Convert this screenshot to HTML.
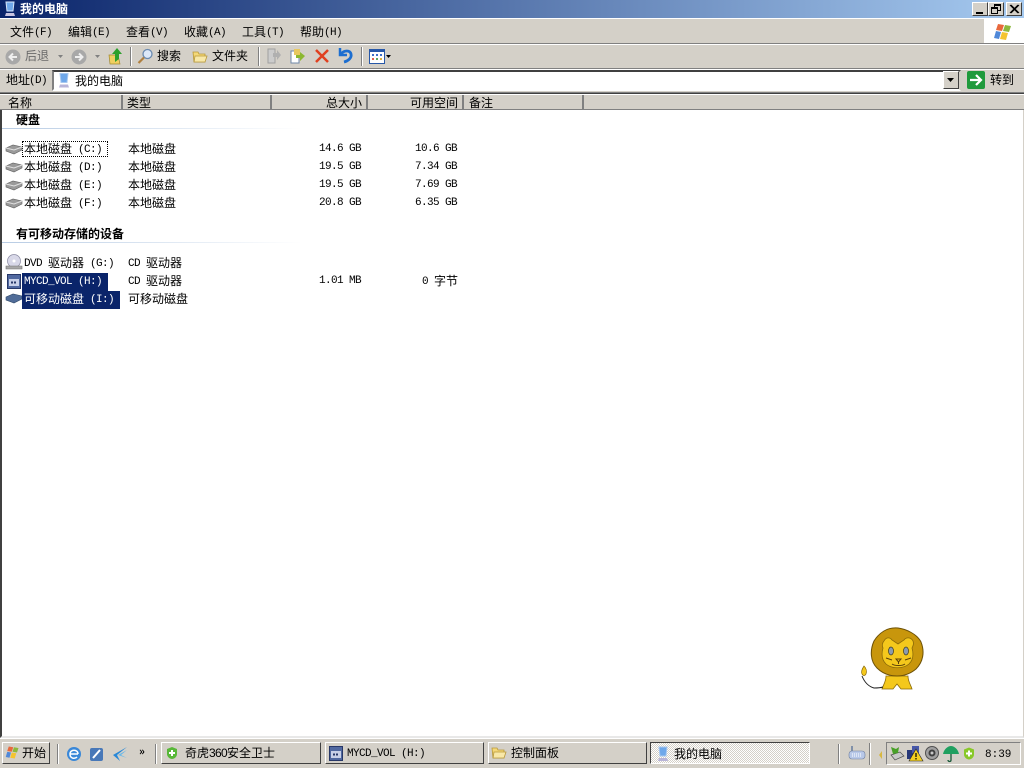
<!DOCTYPE html>
<html lang="zh"><head><meta charset="utf-8"><title>我的电脑</title>
<style>
html,body{margin:0;padding:0;width:1024px;height:768px;overflow:hidden;background:#d4d0c8}
body{position:relative;font:12px/14px "WenQuanYi Zen Hei","Noto Sans CJK SC",sans-serif;color:#000}
.a{position:absolute}
.t{position:absolute;white-space:pre;font:12px/14px "WenQuanYi Zen Hei","Noto Sans CJK SC",sans-serif}
.m{font:11px/14px "Liberation Mono",monospace;letter-spacing:-.6px;position:relative;top:-1px}
.n{position:absolute;white-space:pre;text-align:right;font:11px/14px "Liberation Mono",monospace;letter-spacing:-.6px}
.r{text-align:right}
.b{box-sizing:border-box;position:absolute;background:#d4d0c8;border:1px solid;border-color:#fff #404040 #404040 #fff}
.h{position:absolute;top:95px;height:15px;box-sizing:border-box;border-right:2px solid #808080;border-bottom:1px solid #808080;background:#d4d0c8}
.sep{position:absolute;width:1px;background:#808080;border-right:1px solid #fff}
.sel{position:absolute;background:#0a246a;height:18px}
.w{color:#fff}
svg{position:absolute;overflow:visible}
</style></head><body>

<!-- title bar -->
<div class="a" style="left:0;top:0;width:1024px;height:18px;background:linear-gradient(90deg,#0a246a,#a6caf0)"></div>
<svg style="left:3px;top:1px" width="14" height="16" viewBox="0 0 14 16"><path d="M3 1h8l-1 9H4z" fill="#6fa8ea" stroke="#d8e6fa"/><path d="M3 12h8l1 3H2z" fill="#c8c4e0"/></svg>
<div class="t" style="left:20px;top:2px;color:#fff;font-weight:bold">我的电脑</div>
<div class="b" style="left:972px;top:2px;width:16px;height:14px"><div class="a" style="left:3px;top:9px;width:7px;height:2px;background:#000"></div></div>
<div class="b" style="left:988px;top:2px;width:16px;height:14px"><div class="a" style="left:5px;top:1px;width:5px;height:4px;border:1px solid #000;border-top-width:2px"></div><div class="a" style="left:2px;top:4px;width:5px;height:4px;border:1px solid #000;border-top-width:2px;background:#d4d0c8"></div></div>
<div class="b" style="left:1006px;top:2px;width:16px;height:14px"><svg style="left:3px;top:2px" width="9" height="8"><path d="M0 0L8 8M1 0L9 8M8 0L0 8M9 0L1 8" stroke="#000"/></svg></div>

<!-- menu bar -->
<div class="a" style="left:0;top:18px;width:1024px;height:1px;background:#fff"></div>
<div class="t" style="left:10px;top:25px">文件<span class="m">(F)</span></div>
<div class="t" style="left:68px;top:25px">编辑<span class="m">(E)</span></div>
<div class="t" style="left:126px;top:25px">查看<span class="m">(V)</span></div>
<div class="t" style="left:184px;top:25px">收藏<span class="m">(A)</span></div>
<div class="t" style="left:242px;top:25px">工具<span class="m">(T)</span></div>
<div class="t" style="left:300px;top:25px">帮助<span class="m">(H)</span></div>
<div class="a" style="left:984px;top:19px;width:40px;height:24px;background:#fff"></div>
<svg style="left:993px;top:22px" width="20" height="20" viewBox="0 0 20 20"><path d="M5 2l6 1-2 6-6-1z" fill="#e8683c"/><path d="M12 3l6 1-2 6-6-1z" fill="#8cb83c"/><path d="M3 9l5 1-2 7-5-1z" fill="#5088d8"/><path d="M9 10l6 1-2 7-6-1z" fill="#f4c430"/></svg>
<div class="a" style="left:0;top:43px;width:1024px;height:1px;background:#808080"></div>
<div class="a" style="left:0;top:44px;width:1024px;height:1px;background:#fff"></div>

<!-- toolbar -->
<svg style="left:5px;top:49px" width="16" height="16"><circle cx="8" cy="8" r="7.5" fill="#a8a8a8"/><path d="M12 8H5M8 4.500L4.500 8 8 11.500" fill="none" stroke="#eee" stroke-width="2"/></svg>
<div class="t" style="left:25px;top:49px;color:#6a6a6a">后退</div>
<svg style="left:58px;top:55px" width="6" height="4"><path d="M0 0h5L2.500 3z" fill="#808080"/></svg>
<svg style="left:71px;top:49px" width="16" height="16"><circle cx="8" cy="8" r="7.500" fill="#a8a8a8"/><path d="M4 8h7M8 4.500L11.500 8 8 11.500" fill="none" stroke="#eee" stroke-width="2"/></svg>
<svg style="left:95px;top:55px" width="6" height="4"><path d="M0 0h5L2.500 3z" fill="#808080"/></svg>
<svg style="left:108px;top:47px" width="16" height="18" viewBox="0 0 16 18"><path d="M1 8h9l2 9H2z" fill="#f0d060" stroke="#a08830" stroke-width=".7"/><path d="M7 15V7H4l5-6 5 6h-3v5z" fill="#2ca02c"/></svg>
<div class="sep" style="left:130px;top:47px;height:19px"></div>
<svg style="left:137px;top:48px" width="17" height="17" viewBox="0 0 17 17"><circle cx="10.500" cy="6" r="4.500" fill="#dce8f8" stroke="#6a8ab0" stroke-width="1.300"/><path d="M7 9.500L1.500 15" stroke="#b08040" stroke-width="2.200"/></svg>
<div class="t" style="left:157px;top:49px">搜索</div>
<svg style="left:192px;top:49px" width="16" height="15" viewBox="0 0 16 15"><path d="M1 3h5l1 2h6v8H2z" fill="#f4d878" stroke="#b89838" stroke-width=".8"/><path d="M3 7h12l-2 6H2z" fill="#f8e8a8" stroke="#b89838" stroke-width=".8"/></svg>
<div class="t" style="left:212px;top:49px">文件夹</div>
<div class="sep" style="left:258px;top:47px;height:19px"></div>
<svg style="left:266px;top:48px" width="16" height="16" viewBox="0 0 16 16"><path d="M2 1h7v14H2z" fill="#ccc" stroke="#a0a0a0"/><path d="M7 5h4V2l4 5-4 5V9H7z" fill="#b0b0b0"/></svg>
<svg style="left:290px;top:48px" width="16" height="16" viewBox="0 0 16 16"><path d="M1 3h8v12H1z" fill="#fff" stroke="#7088a8"/><path d="M4 1h6v6H4z" fill="#e8c860"/><path d="M6 7h4V4l5 4-5 5v-3H6z" fill="#8cb830"/></svg>
<svg style="left:314px;top:48px" width="16" height="16" viewBox="0 0 16 16"><path d="M2 2l12 12M14 2L2 14" stroke="#e04020" stroke-width="2.500"/></svg>
<svg style="left:337px;top:47px" width="17" height="17" viewBox="0 0 17 17"><path d="M3 1v7h7" fill="none" stroke="#1c6ed0" stroke-width="2.500"/><path d="M4 7c3-4 9-4 10 0 1 4-3 7-7 8" fill="none" stroke="#1c6ed0" stroke-width="2.800"/></svg>
<div class="sep" style="left:361px;top:47px;height:19px"></div>
<svg style="left:369px;top:49px" width="16" height="15" viewBox="0 0 16 15"><rect x=".5" y=".5" width="15" height="14" fill="#fff" stroke="#2858a8"/><rect x="1" y="1" width="14" height="2" fill="#2858a8"/><path d="M3 5h2v2H3zM7 5h2v2H7zM11 5h2v2h-2z" fill="#4070c8"/><path d="M3 9h2v2H3z" fill="#e06050"/><path d="M7 9h2v2H7z" fill="#60a860"/><path d="M11 9h2v2h-2z" fill="#e0b040"/></svg>
<svg style="left:386px;top:55px" width="6" height="4"><path d="M0 0h5L2.500 3z" fill="#000"/></svg>
<div class="a" style="left:0;top:68px;width:1024px;height:1px;background:#808080"></div>
<div class="a" style="left:0;top:69px;width:1024px;height:1px;background:#fff"></div>

<!-- address bar -->
<div class="t" style="left:6px;top:73px">地址<span class="m" style="margin-left:-1px">(D)</span></div>
<div class="a" style="left:52px;top:70px;width:909px;height:21px;box-sizing:border-box;background:#fff;border:2px solid;border-color:#404040 #d4d0c8 #fff #808080"></div>
<svg style="left:57px;top:72px" width="14" height="17" viewBox="0 0 14 16"><path d="M3 1h8l-1 9H4z" fill="#6fa8ea" stroke="#a8c8f0"/><path d="M3 12h8l1 3H2z" fill="#b8b4d8"/></svg>
<div class="t" style="left:75px;top:74px">我的电脑</div>
<div class="b" style="left:943px;top:71px;width:16px;height:18px"><svg style="left:3px;top:6px" width="8" height="4"><path d="M0 0h7L3.500 4z" fill="#000"/></svg></div>
<div class="a" style="left:967px;top:71px;width:18px;height:18px;background:#1f9a3c;border-radius:2px"></div>
<svg style="left:969px;top:73px" width="14" height="14"><path d="M1 7h10M7 2l5 5-5 5" fill="none" stroke="#fff" stroke-width="2.200"/></svg>
<div class="t" style="left:990px;top:73px">转到</div>
<div class="a" style="left:0;top:92px;width:1024px;height:1px;background:#808080"></div>
<div class="a" style="left:0;top:93px;width:1024px;height:1px;background:#404040"></div>
<div class="a" style="left:0;top:94px;width:1024px;height:1px;background:#fff"></div>

<!-- header -->
<div class="h" style="left:0;width:123px"></div>
<div class="h" style="left:123px;width:149px"></div>
<div class="h" style="left:272px;width:96px"></div>
<div class="h" style="left:368px;width:96px"></div>
<div class="h" style="left:464px;width:120px"></div>
<div class="h" style="left:584px;width:440px;border-right:0"></div>
<div class="t" style="left:8px;top:96px">名称</div>
<div class="t" style="left:127px;top:96px">类型</div>
<div class="t r" style="left:272px;width:90px;top:96px">总大小</div>
<div class="t r" style="left:368px;width:90px;top:96px">可用空间</div>
<div class="t" style="left:469px;top:96px">备注</div>

<!-- content -->
<div class="a" style="left:0;top:110px;width:1024px;height:628px;background:#fff;border-left:2px solid #404040;box-sizing:border-box;border-right:1px solid #d4d0c8;border-bottom:2px solid #e8e8e8"></div>
<div class="t" style="left:16px;top:113px;font-weight:bold">硬盘</div>
<div class="a" style="left:2px;top:128px;width:300px;height:1px;background:linear-gradient(90deg,#b8cce4,#fff)"></div>

<div class="a" style="left:22px;top:141px;width:86px;height:16px;box-sizing:border-box;border:1px dotted #000"></div>
<svg style="left:5px;top:143px" width="18" height="12" viewBox="0 0 18 12"><path d="M1 5l7-3 9 2v3l-8 4-8-3z" fill="#9a9a9a" stroke="#606060" stroke-width=".6"/><path d="M1 5l8 2 8-3" fill="none" stroke="#e0e0e0"/></svg>
<svg style="left:5px;top:161px" width="18" height="12" viewBox="0 0 18 12"><path d="M1 5l7-3 9 2v3l-8 4-8-3z" fill="#9a9a9a" stroke="#606060" stroke-width=".6"/><path d="M1 5l8 2 8-3" fill="none" stroke="#e0e0e0"/></svg>
<svg style="left:5px;top:179px" width="18" height="12" viewBox="0 0 18 12"><path d="M1 5l7-3 9 2v3l-8 4-8-3z" fill="#9a9a9a" stroke="#606060" stroke-width=".6"/><path d="M1 5l8 2 8-3" fill="none" stroke="#e0e0e0"/></svg>
<svg style="left:5px;top:197px" width="18" height="12" viewBox="0 0 18 12"><path d="M1 5l7-3 9 2v3l-8 4-8-3z" fill="#9a9a9a" stroke="#606060" stroke-width=".6"/><path d="M1 5l8 2 8-3" fill="none" stroke="#e0e0e0"/></svg>

<div class="t" style="left:24px;top:142px">本地磁盘<span class="m"> (C:)</span></div>
<div class="t" style="left:128px;top:142px">本地磁盘</div>
<div class="n" style="left:272px;width:89px;top:142px">14.6 GB</div>
<div class="n" style="left:368px;width:89px;top:142px">10.6 GB</div>
<div class="t" style="left:24px;top:160px">本地磁盘<span class="m"> (D:)</span></div>
<div class="t" style="left:128px;top:160px">本地磁盘</div>
<div class="n" style="left:272px;width:89px;top:160px">19.5 GB</div>
<div class="n" style="left:368px;width:89px;top:160px">7.34 GB</div>
<div class="t" style="left:24px;top:178px">本地磁盘<span class="m"> (E:)</span></div>
<div class="t" style="left:128px;top:178px">本地磁盘</div>
<div class="n" style="left:272px;width:89px;top:178px">19.5 GB</div>
<div class="n" style="left:368px;width:89px;top:178px">7.69 GB</div>
<div class="t" style="left:24px;top:196px">本地磁盘<span class="m"> (F:)</span></div>
<div class="t" style="left:128px;top:196px">本地磁盘</div>
<div class="n" style="left:272px;width:89px;top:196px">20.8 GB</div>
<div class="n" style="left:368px;width:89px;top:196px">6.35 GB</div>

<div class="t" style="left:16px;top:227px;font-weight:bold">有可移动存储的设备</div>
<div class="a" style="left:2px;top:242px;width:300px;height:1px;background:linear-gradient(90deg,#b8cce4,#fff)"></div>

<svg style="left:5px;top:254px" width="18" height="17" viewBox="0 0 18 17"><circle cx="9" cy="7" r="6.500" fill="#d8d8e8" stroke="#8888a0" stroke-width=".7"/><circle cx="9" cy="7" r="1.500" fill="#fff"/><path d="M1 12h16v3H1z" fill="#a8a8a8" stroke="#707070" stroke-width=".6"/></svg>
<div class="t" style="left:24px;top:256px"><span class="m">DVD </span>驱动器<span class="m"> (G:)</span></div>
<div class="t" style="left:128px;top:256px"><span class="m">CD </span>驱动器</div>

<svg style="left:7px;top:274px" width="14" height="15" viewBox="0 0 14 15"><rect x=".5" y=".5" width="13" height="14" fill="#5068a0" stroke="#283868"/><rect x="2" y="5" width="10" height="7" fill="#c8d0e8"/><path d="M4 8.500h6" stroke="#283868" stroke-width="2" stroke-dasharray="2 1"/></svg>
<div class="sel" style="left:22px;top:273px;width:86px"></div>
<div class="t w" style="left:24px;top:274px"><span class="m">MYCD_VOL (H:)</span></div>
<div class="t" style="left:128px;top:274px"><span class="m">CD </span>驱动器</div>
<div class="n" style="left:272px;width:89px;top:274px">1.01 MB</div>
<div class="t r" style="left:368px;width:90px;top:274px"><span class="m">0 </span>字节</div>

<svg style="left:5px;top:292px" width="18" height="12" viewBox="0 0 18 12"><path d="M1 5l7-3 9 2v3l-8 4-8-3z" fill="#506c98" stroke="#304868" stroke-width=".6"/></svg>
<div class="sel" style="left:22px;top:291px;width:98px"></div>
<div class="t w" style="left:24px;top:292px">可移动磁盘<span class="m"> (I:)</span></div>
<div class="t" style="left:128px;top:292px">可移动磁盘</div>

<!-- lion -->
<svg style="left:860px;top:626px" width="66" height="66" viewBox="0 0 66 66">
<path d="M26 50c0 6-3 9-4 13h11l4-5 4 5h11c-1-4-4-7-4-13z" fill="#f4c81c" stroke="#8a6a08" stroke-width=".8"/>
<path d="M38 2c8 1 19 6 23 14 4 10 2 20-5 27-6 5-13 7-19 7-8 0-15-3-20-8C10 35 10 24 14 15 19 7 27 1 38 2z" fill="#c8960c" stroke="#6c5006" stroke-width="1"/>
<path d="M24 15c2-4 6-4 8-1l6 4 6-4c2-3 7-3 9 1 1 3 0 5-1 7 2 7 1 12-3 16-6 5-17 5-23 0-4-4-5-9-3-16-1-2-1-5 1-7z" fill="#f4c81c" stroke="#8a6a08" stroke-width=".8"/>
<ellipse cx="31" cy="25" rx="2.500" ry="4" fill="#8a9ab0" stroke="#3a3a20" stroke-width=".7"/><ellipse cx="46" cy="25" rx="2.500" ry="4" fill="#8a9ab0" stroke="#3a3a20" stroke-width=".7"/>
<path d="M36 33h5l-2.500 3zM38.500 36v2M32 38c3 2 10 2 13 0M26 32l6 2M51 32l-6 2" fill="none" stroke="#5a4008" stroke-width="1"/>
<path d="M2 50c2 5 5 10 12 12 3 0 6 0 9-1" fill="none" stroke="#222" stroke-width="1"/>
<path d="M4 40c-2 3-3 6-2 8 1 2 3 2 4 0 1-3 0-6-2-8z" fill="#f4c81c" stroke="#8a6a08" stroke-width=".7"/>
</svg>

<!-- taskbar -->
<div class="a" style="left:0;top:738px;width:1024px;height:30px;background:#d4d0c8;border-top:1px solid #fff;box-sizing:border-box"></div>
<div class="b" style="left:2px;top:742px;width:48px;height:22px;border-color:#fff #404040 #404040 #fff"></div>
<svg style="left:5px;top:745px" width="15" height="15" viewBox="0 0 20 20"><path d="M5 2l6 1-2 6-6-1z" fill="#e8683c"/><path d="M12 3l6 1-2 6-6-1z" fill="#8cb83c"/><path d="M3 9l5 1-2 7-5-1z" fill="#5088d8"/><path d="M9 10l6 1-2 7-6-1z" fill="#f4c430"/></svg>
<div class="t" style="left:22px;top:746px">开始</div>
<div class="sep" style="left:57px;top:744px;height:20px"></div>
<svg style="left:66px;top:746px" width="16" height="16" viewBox="0 0 16 16"><circle cx="8" cy="8" r="7" fill="#3a88d8"/><path d="M4 8h8M12 8c0-5-8-5-8 0s5 5 7 3" fill="none" stroke="#fff" stroke-width="1.500"/></svg>
<svg style="left:89px;top:746px" width="15" height="16" viewBox="0 0 15 16"><rect x="1" y="2" width="13" height="13" rx="2" fill="#4878b8"/><path d="M4 12l7-8" stroke="#fff" stroke-width="2"/></svg>
<svg style="left:112px;top:746px" width="16" height="16" viewBox="0 0 16 16"><path d="M15 1L1 9l7 6-3-6z" fill="#2888d8"/><path d="M15 4L6 9l9 3-6-3z" fill="#68b8e8"/></svg>
<div class="t" style="left:139px;top:744px;font-weight:bold;font-size:11px">»</div>
<div class="sep" style="left:155px;top:744px;height:20px"></div>

<div class="b" style="left:161px;top:742px;width:160px;height:22px"></div>
<svg style="left:165px;top:746px" width="14" height="14" viewBox="0 0 14 14"><path d="M7 1l5 2v5c0 3-3 5-5 5s-5-2-5-5V3z" fill="#58b838"/><path d="M7 4v6M4 7h6" stroke="#fff" stroke-width="2"/></svg>
<div class="t" style="left:185px;top:746px">奇虎<span style="font:12px/14px 'Liberation Sans',sans-serif;letter-spacing:-.7px">360</span>安全卫士</div>

<div class="b" style="left:325px;top:742px;width:159px;height:22px"></div>
<svg style="left:329px;top:746px" width="14" height="15" viewBox="0 0 14 15"><rect x=".5" y=".5" width="13" height="14" fill="#5068a0" stroke="#283868"/><rect x="2" y="5" width="10" height="7" fill="#c8d0e8"/><path d="M4 8.500h6" stroke="#283868" stroke-width="2" stroke-dasharray="2 1"/></svg>
<div class="t" style="left:347px;top:746px"><span class="m">MYCD_VOL (H:)</span></div>

<div class="b" style="left:488px;top:742px;width:159px;height:22px"></div>
<svg style="left:491px;top:745px" width="16" height="15" viewBox="0 0 16 15"><path d="M1 3h5l1 2h6v8H2z" fill="#f4d878" stroke="#b89838" stroke-width=".8"/><path d="M3 7h12l-2 6H2z" fill="#f8e8a8" stroke="#b89838" stroke-width=".8"/></svg>
<div class="t" style="left:511px;top:746px">控制面板</div>

<div class="a" style="left:650px;top:742px;width:160px;height:22px;box-sizing:border-box;border:1px solid;border-color:#404040 #fff #fff #404040;background-color:#eceae6;background-image:repeating-conic-gradient(#fff 0 25%,#d4d0c8 0 50%);background-size:2px 2px"></div>
<svg style="left:656px;top:746px" width="14" height="16" viewBox="0 0 14 16"><path d="M3 1h8l-1 9H4z" fill="#6fa8ea" stroke="#a8c8f0"/><path d="M3 12h8l1 3H2z" fill="#b8b4d8"/></svg>
<div class="t" style="left:674px;top:747px">我的电脑</div>

<div class="sep" style="left:838px;top:744px;height:20px"></div>
<svg style="left:848px;top:745px" width="18" height="16" viewBox="0 0 18 16"><path d="M4 1v5" stroke="#8090a8" stroke-width="2"/><rect x="1" y="6" width="16" height="8" rx="3" fill="#b8c8e8" stroke="#7080a0" stroke-width=".6"/><path d="M4 9h10M4 11h10" stroke="#fff" stroke-dasharray="1 1"/></svg>
<div class="sep" style="left:869px;top:743px;height:22px"></div>
<svg style="left:879px;top:751px" width="4" height="8"><path d="M3 0L0 4l3 4z" fill="#d8b840"/></svg>
<div class="a" style="left:886px;top:742px;width:135px;height:23px;box-sizing:border-box;border:1px solid;border-color:#808080 #fff #fff #808080"></div>

<svg style="left:889px;top:745px" width="16" height="17" viewBox="0 0 16 17"><path d="M2 10l9-3 4 4-9 4z" fill="#c8c8c8" stroke="#505050" stroke-width=".7"/><path d="M2 2l5 2 3-2-1 6-5 1z" fill="#48a028"/></svg>
<svg style="left:907px;top:745px" width="17" height="17" viewBox="0 0 17 17"><rect x="0" y="5" width="7" height="9" fill="#283878"/><rect x="5" y="1" width="7" height="7" fill="#4858a8"/><path d="M9 4l7 12H2z" fill="#f4d020" stroke="#282828" stroke-width=".6"/><path d="M9 8v4M9 13v1.500" stroke="#000" stroke-width="1.200"/></svg>
<svg style="left:925px;top:745px" width="15" height="16" viewBox="0 0 15 16"><circle cx="7" cy="8" r="6.500" fill="#a0a0a0" stroke="#505050"/><circle cx="7" cy="8" r="3.500" fill="#404040"/><circle cx="7" cy="8" r="1.500" fill="#c8c8c8"/></svg>
<svg style="left:942px;top:745px" width="18" height="18" viewBox="0 0 18 18"><path d="M1 9c1-5 5-8 8-8s7 3 8 8z" fill="#20a060"/><path d="M9 9v6c0 2-3 2-3 0" fill="none" stroke="#185838" stroke-width="1.300"/></svg>
<svg style="left:962px;top:746px" width="14" height="15" viewBox="0 0 14 14"><path d="M7 1l5 2v5c0 3-3 5-5 5s-5-2-5-5V3z" fill="#88c828"/><path d="M7 4v6M4 7h6" stroke="#fff" stroke-width="2"/></svg>
<div class="n" style="left:985px;top:748px;letter-spacing:0">8:39</div>
</body></html>
